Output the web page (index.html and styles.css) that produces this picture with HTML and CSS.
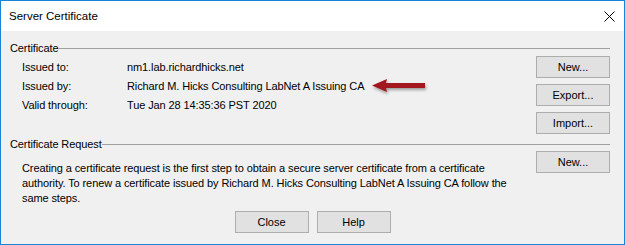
FILE: index.html
```html
<!DOCTYPE html>
<html lang="en">
<head>
  <meta charset="UTF-8" />
  <title>Server Certificate</title>
  <link rel="stylesheet" href="styles.css">
</head>
<body>
  <div class="window">
    <div class="titlebar">
      <span class="title">Server Certificate</span>
      <svg class="close-icon" width="11" height="11" viewBox="0 0 11 11">
        <path d="M0.5 0.5 L10.5 10.5 M10.5 0.5 L0.5 10.5" stroke="#000" stroke-width="1" fill="none" />
      </svg>
    </div>

    <div class="content">
      <div class="group-header"><span>Certificate</span></div>
      <div class="group-body">
        <div class="cert-info">
          <span>Issued to:</span><span>nm1.lab.richardhicks.net</span>
          <span>Issued by:</span><span>Richard M. Hicks Consulting LabNet A Issuing CA</span>
          <span>Valid through:</span><span>Tue Jan 28 14:35:36 PST 2020</span>
        </div>
        <div class="side-buttons">
          <button class="win-button">New...</button>
          <button class="win-button">Export...</button>
          <button class="win-button">Import...</button>
        </div>
      </div>

      <div class="group-header request-header"><span>Certificate Request</span></div>
      <div class="group-body">
        <p class="request-text">Creating a certificate request is the first step to obtain a secure server certificate from a certificate authority. To renew a certificate issued by Richard M. Hicks Consulting LabNet A Issuing CA follow the same steps.</p>
        <div class="side-buttons">
          <button class="win-button">New...</button>
        </div>
      </div>
    </div>

    <div class="footer">
      <button class="win-button">Close</button>
      <button class="win-button">Help</button>
    </div>

    <svg class="callout-arrow" width="56" height="16" viewBox="0 0 56 16">
      <polygon points="1,7.5 16,1 15,5 54,5 54,10 15,10 16,14" fill="#a3171f" />
    </svg>
  </div>
</body>
</html>
```

FILE: styles.css
```css
body {
  margin: 0;
  font-family: 'Liberation Sans', Arial, sans-serif;
  font-size: 11px;
  color: #000;
}

.window {
  position: relative;
  width: 625px;
  height: 245px;
  box-sizing: border-box;
  border: 1px solid #1883d7;
  background: #f0f0f0;
  display: flex;
  flex-direction: column;
}

.titlebar {
  height: 30px;
  flex: none;
  background: #fff;
  display: flex;
  align-items: center;
  justify-content: space-between;
  padding: 0 9px 0 8px;
}

.title {
  font-size: 11.5px;
}

.close-icon {
  display: block;
}

.content {
  padding: 10px 14px 0 9px;
  letter-spacing: -0.1px;
}

.group-header {
  display: flex;
  align-items: center;
  height: 14px;
  line-height: 14px;
}

.group-header::after {
  content: '';
  flex: 1;
  border-top: 1px solid #a0a0a0;
}

.request-header {
  margin-top: 3px;
}

.group-body {
  display: flex;
  justify-content: space-between;
  align-items: flex-start;
  margin-top: 1px;
}

.request-header + .group-body {
  margin-top: 0;
}

.cert-info {
  display: grid;
  grid-template-columns: 105px auto;
  line-height: 19px;
  padding: 2px 0 0 12px;
}

.side-buttons {
  display: flex;
  flex-direction: column;
  gap: 6px;
}

.win-button {
  width: 74px;
  height: 22px;
  box-sizing: border-box;
  border: 1px solid #adadad;
  background: #e1e1e1;
  font-family: 'Liberation Sans', Arial, sans-serif;
  font-size: 11px;
  color: #000;
  padding: 0;
}

.request-text {
  margin: 0;
  padding: 10px 0 0 12px;
  width: 490px;
  line-height: 15px;
}

.footer {
  display: flex;
  justify-content: center;
  gap: 8px;
  margin-top: 5px;
}

.callout-arrow {
  position: absolute;
  left: 370px;
  top: 77px;
  filter: drop-shadow(1px 2px 1.5px rgba(0, 0, 0, 0.35));
}
```
